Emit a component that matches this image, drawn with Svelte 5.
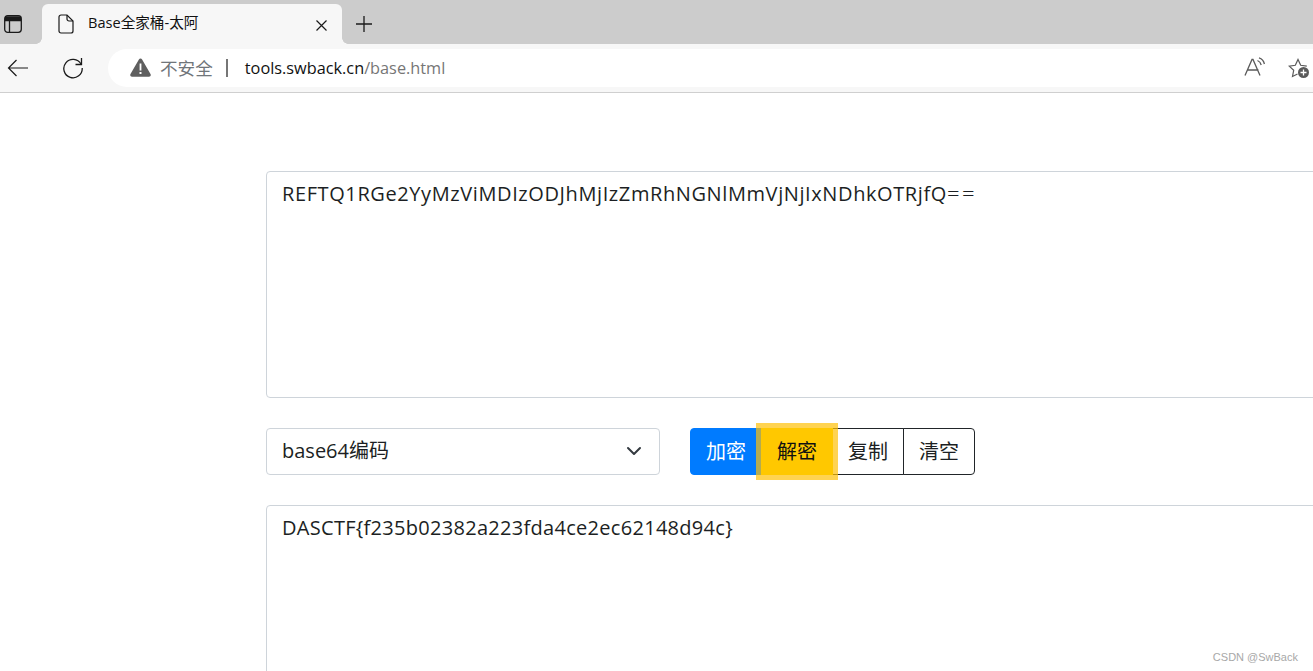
<script>
  let mode = $state('base64');
</script>

<div class="browser">
  <div class="tabstrip">
    <button class="tab-actions" aria-label="Tab actions">
      <svg width="18" height="18" viewBox="0 0 18 18" fill="none" stroke="#1a1a1a" stroke-width="1.3">
        <rect x="0.7" y="0.7" width="16.6" height="16.6" rx="3" />
        <path d="M1 5.5h16M5.5 5.5v12" />
        <path d="M2 1.2h14a1 1 0 0 1 1 1v3H1v-3a1 1 0 0 1 1-1z" fill="#1a1a1a" stroke="none" />
      </svg>
    </button>
    <div class="tab">
      <svg width="16" height="20" viewBox="0 0 16 20" fill="none" stroke="#1a1a1a" stroke-width="1.2">
        <path d="M3 1h6l6 6v10a2 2 0 0 1-2 2H3a2 2 0 0 1-2-2V3a2 2 0 0 1 2-2z" />
        <path d="M9 1v4a2 2 0 0 0 2 2h4" />
      </svg>
      <span class="tab-title">Base全家桶-太阿</span>
      <svg class="tab-close" width="11" height="11" viewBox="0 0 11 11" stroke="#1a1a1a" stroke-width="1.2">
        <path d="M0.5 0.5l10 10M10.5 0.5l-10 10" />
      </svg>
    </div>
    <button class="new-tab" aria-label="New tab">
      <svg width="18" height="18" viewBox="0 0 18 18" stroke="#1a1a1a" stroke-width="1.3">
        <path d="M9 1v16M1 9h16" />
      </svg>
    </button>
  </div>

  <div class="toolbar">
    <button class="nav back" aria-label="Back">
      <svg width="22" height="18" viewBox="0 0 22 18" fill="none" stroke="#1a1a1a" stroke-width="1.2">
        <path d="M21 9H1.5M9.5 1L1.5 9l8 8" />
      </svg>
    </button>
    <button class="nav reload" aria-label="Reload">
      <svg width="22" height="22" viewBox="0 0 22 22" fill="none" stroke="#1a1a1a" stroke-width="1.3">
        <path d="M19 7A9.2 9.2 0 1 0 20.2 11" />
        <path d="M19.5 1v6.5H13.5" />
      </svg>
    </button>
    <div class="address">
      <svg class="warn" width="21" height="19" viewBox="0 0 21 19">
        <path d="M10.5 0.5c.7 0 1.2.4 1.6 1l8.4 14.6c.7 1.2-.1 2.6-1.5 2.6H2c-1.4 0-2.2-1.4-1.5-2.6L8.9 1.5c.4-.6.9-1 1.6-1z" fill="#5f5f5f" />
        <path d="M9.6 5.5h1.8v7H9.6zM9.5 14h2v2h-2z" fill="#fff" />
      </svg>
      <span class="insecure">不安全</span>
      <span class="sep"></span>
      <span class="url"><span class="host">tools.swback.cn</span>/base.html</span>
      <div class="addr-icons">
        <svg width="22" height="20" viewBox="0 0 22 20" fill="none" stroke="#5a5a5a" stroke-width="1.3">
          <path d="M1 18.5L8 2.5h1L16 18.5M3.5 13h11" />
          <path d="M13.5 3.5c2 .8 3.2 2.2 3.7 4.5M15 .8c3 1 4.8 3.2 5.4 6.2" />
        </svg>
        <svg width="22" height="22" viewBox="0 0 22 22">
          <path d="M9.5 17L4.5 19.5l1.2-6.2-4.5-4.2 6.1-.8L10 2.5l2.7 5.8 6.1.8" fill="none" stroke="#5a5a5a" stroke-width="1.2" />
          <circle cx="15.5" cy="15.5" r="5.5" fill="#5a5a5a" />
          <path d="M15.5 12.5v6M12.5 15.5h6" stroke="#fff" stroke-width="1.3" />
        </svg>
      </div>
    </div>
  </div>

  <main class="page">
    <div class="box first" role="textbox" aria-multiline="true" tabindex="0">REFTQ1RGe2YyMzViMDIzODJhMjIzZmRhNGNlMmVjNjIxNDhkOTRjfQ<span class="padding-chars">==</span></div>

    <div class="controls">
      <div class="select-wrap">
        <select bind:value={mode}>
          <option value="base64">base64编码</option>
          <option value="base32">base32编码</option>
          <option value="base16">base16编码</option>
        </select>
        <svg class="chevron" width="16" height="16" viewBox="0 0 16 16" fill="none" stroke="#343a40" stroke-width="2" stroke-linecap="round" stroke-linejoin="round">
          <path d="M2 5l6 6 6-6" />
        </svg>
      </div>
      <div class="btn-group">
        <button class="btn primary">加密</button>
        <button class="btn warning">解密</button>
        <button class="btn outline">复制</button>
        <button class="btn outline last">清空</button>
      </div>
    </div>

    <div class="box second" role="textbox" aria-multiline="true" tabindex="0">DASCTF&#123;f235b02382a223fda4ce2ec62148d94c&#125;</div>

    <span class="watermark">CSDN @SwBack</span>
  </main>
</div>

<style>
  :global(body) {
    margin: 0;
    overflow: hidden;
    background: #fff;
  }

  .browser {
    width: 1313px;
    height: 671px;
    overflow: hidden;
    display: flex;
    flex-direction: column;
    font-family: "Open Sans", "Noto Sans CJK SC", sans-serif;
  }

  button {
    font-family: inherit;
  }

  .tabstrip {
    flex: none;
    height: 44px;
    background: #cccccc;
    display: flex;
    align-items: flex-end;
  }

  .tab-actions {
    width: 42px;
    height: 40px;
    border: 0;
    background: none;
    display: flex;
    align-items: center;
    justify-content: flex-start;
    padding: 0 0 0 4px;
  }

  .tab {
    position: relative;
    width: 300px;
    height: 40px;
    background: #f7f7f7;
    border-radius: 6px 6px 0 0;
    display: flex;
    align-items: center;
    padding: 0 15px 0 16px;
    box-sizing: border-box;
  }

  .tab::before,
  .tab::after {
    content: "";
    position: absolute;
    bottom: 0;
    width: 6px;
    height: 6px;
  }

  .tab::before {
    left: -6px;
    background: radial-gradient(circle at 0 0, transparent 5.5px, #f7f7f7 6px);
  }

  .tab::after {
    right: -6px;
    background: radial-gradient(circle at 100% 0, transparent 5.5px, #f7f7f7 6px);
  }

  .tab-title {
    margin-left: 14px;
    padding-bottom: 5px;
    font-size: 14.6px;
    color: #111;
    flex: 1;
  }

  .tab-close {
    margin-top: 2px;
  }

  .new-tab {
    width: 44px;
    height: 40px;
    border: 0;
    background: none;
    padding: 0;
    display: flex;
    align-items: center;
    justify-content: center;
  }

  .toolbar {
    flex: none;
    height: 48px;
    background: #f7f7f7;
    border-bottom: 1px solid #cfcfcf;
    display: flex;
    align-items: center;
  }

  .nav {
    border: 0;
    background: none;
    padding: 0;
    display: flex;
    align-items: center;
    justify-content: center;
  }

  .back {
    width: 36px;
  }

  .reload {
    width: 36px;
    margin-left: 19px;
  }

  .address {
    margin-left: 17px;
    flex: 1;
    height: 38px;
    border-radius: 19px 0 0 19px;
    background: #fff;
    display: flex;
    align-items: center;
    padding-left: 22px;
    margin-top: -1px;
    position: relative;
  }

  .insecure {
    margin-left: 9px;
    font-size: 17.6px;
    color: #70757a;
  }

  .sep {
    width: 2px;
    height: 18px;
    background: #767676;
    margin: 0 17px 0 13px;
  }

  .url {
    font-size: 16.3px;
    color: #767676;
  }

  .host {
    color: #111;
  }

  .addr-icons {
    position: absolute;
    right: 3px;
    top: 8px;
    display: flex;
    gap: 22px;
  }

  .page {
    flex: 1;
    position: relative;
    padding: 78px 0 0 266px;
    background: #fff;
    overflow: hidden;
  }

  .box {
    width: 1100px;
    box-sizing: border-box;
    border: 1px solid #ced4da;
    border-radius: 4px;
    padding: 7px 15px;
    font-size: 20px;
    line-height: 30px;
    color: #1c1f23;
    outline: none;
  }

  .first {
    height: 227px;
    letter-spacing: 0.6px;
  }

  .padding-chars {
    font-size: 22px;
    line-height: 1;
    letter-spacing: 2.6px;
    font-weight: 300;
  }

  .second {
    height: 227px;
    letter-spacing: 0.29px;
  }

  .controls {
    display: flex;
    align-items: stretch;
    margin: 30px 0;
    height: 47px;
  }

  .select-wrap {
    position: relative;
    width: 394px;
  }

  select {
    appearance: none;
    width: 100%;
    height: 100%;
    box-sizing: border-box;
    border: 1px solid #ced4da;
    border-radius: 4px;
    background: #fff;
    padding: 0 40px 2px 15px;
    font-family: inherit;
    font-size: 20px;
    color: #1c1f23;
    outline: none;
  }

  .chevron {
    position: absolute;
    right: 18px;
    top: 15px;
    pointer-events: none;
  }

  .btn-group {
    display: flex;
    margin-left: 30px;
  }

  .btn {
    border: 1px solid #212529;
    background: #fff;
    color: #1c1f23;
    font-size: 20px;
    padding: 0 0 2px;
    white-space: nowrap;
    margin: 0 0 0 -1px;
    position: relative;
    box-sizing: border-box;
  }

  .primary {
    width: 72px;
    margin-left: 0;
    background: #007bff;
    border-color: #007bff;
    color: #fff;
    border-radius: 4px 0 0 4px;
  }

  .warning {
    width: 72px;
    margin-left: -1px;
    background: #ffc800;
    border-color: #ffc800;
    color: #111;
    box-shadow: 0 0 0 5px rgba(255, 193, 7, 0.7);
    z-index: 1;
  }

  .outline {
    width: 72px;
  }

  .last {
    width: 72px;
    border-radius: 0 4px 4px 0;
  }

  .watermark {
    position: absolute;
    right: 15px;
    bottom: 8px;
    font-family: "Liberation Sans", sans-serif;
    font-size: 11px;
    color: #a8a8a8;
  }
</style>
